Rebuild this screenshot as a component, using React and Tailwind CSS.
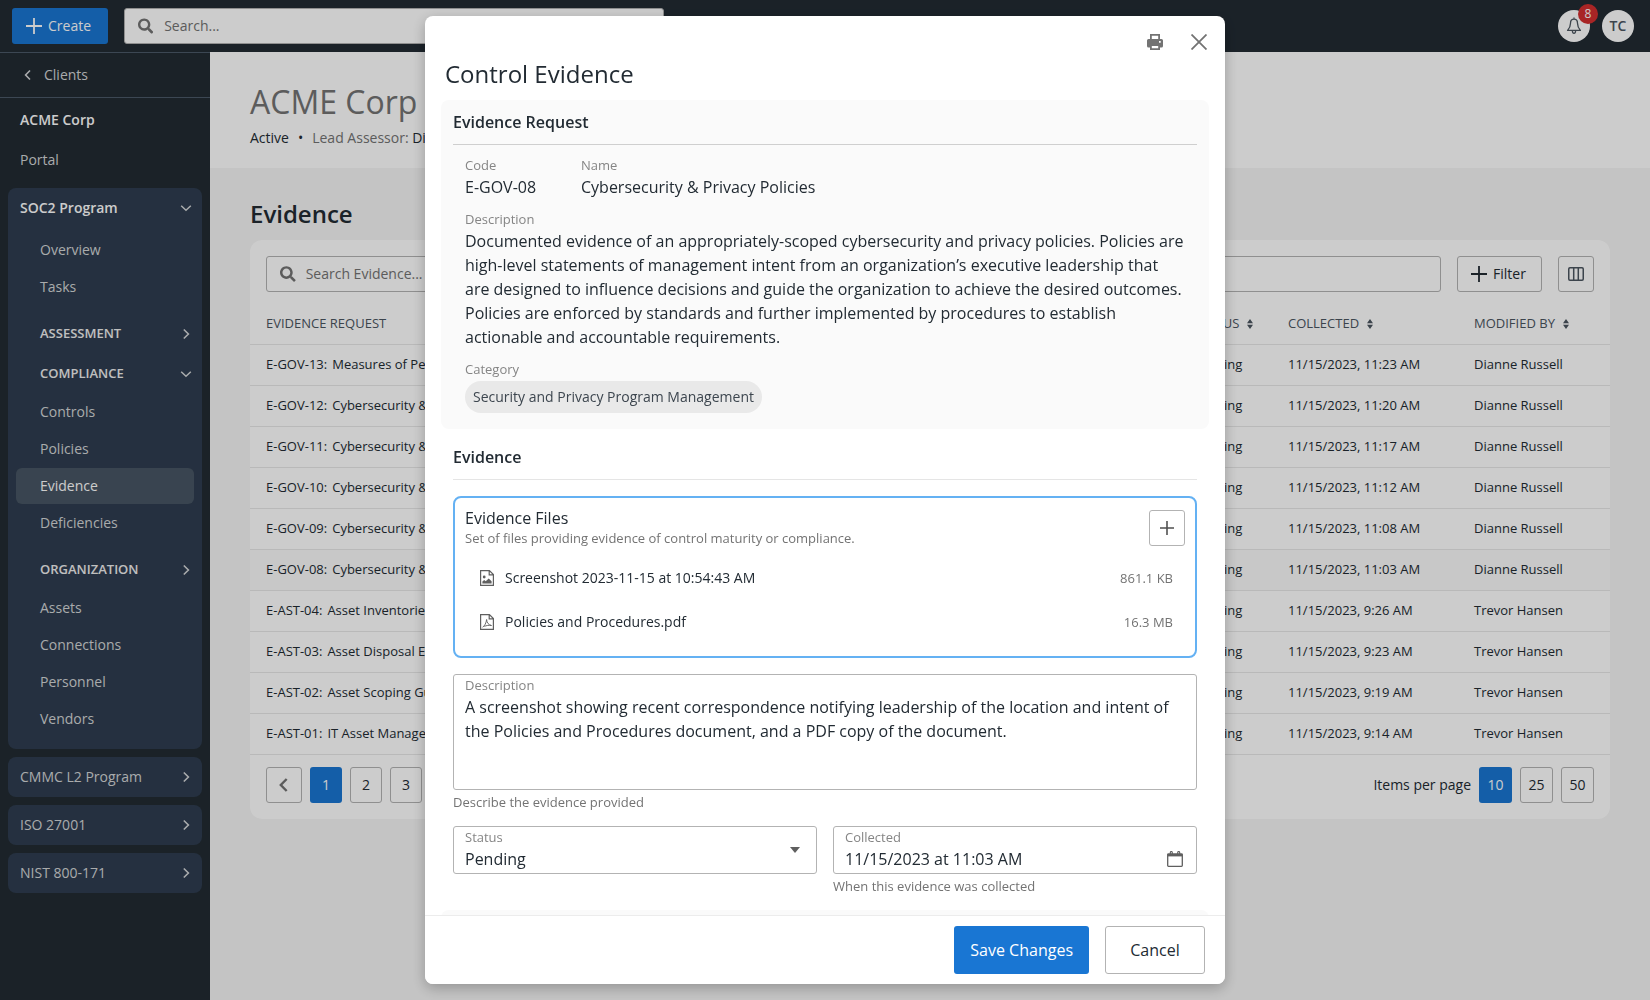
import React, { useState } from 'react';
import { FaSearch } from 'react-icons/fa';

const EVIDENCE = [
  { code: 'E-GOV-13', name: 'Measures of Performance', status: 'Pending', collected: '11/15/2023, 11:23 AM', user: 'Dianne Russell' },
  { code: 'E-GOV-12', name: 'Cybersecurity & Privacy Contacts', status: 'Pending', collected: '11/15/2023, 11:20 AM', user: 'Dianne Russell' },
  { code: 'E-GOV-11', name: 'Cybersecurity & Privacy Reviews', status: 'Pending', collected: '11/15/2023, 11:17 AM', user: 'Dianne Russell' },
  { code: 'E-GOV-10', name: 'Cybersecurity & Privacy Procedures', status: 'Pending', collected: '11/15/2023, 11:12 AM', user: 'Dianne Russell' },
  { code: 'E-GOV-09', name: 'Cybersecurity & Privacy Standards', status: 'Pending', collected: '11/15/2023, 11:08 AM', user: 'Dianne Russell' },
  { code: 'E-GOV-08', name: 'Cybersecurity & Privacy Policies', status: 'Pending', collected: '11/15/2023, 11:03 AM', user: 'Dianne Russell' },
  { code: 'E-AST-04', name: 'Asset Inventories', status: 'Pending', collected: '11/15/2023, 9:26 AM', user: 'Trevor Hansen' },
  { code: 'E-AST-03', name: 'Asset Disposal Evidence', status: 'Pending', collected: '11/15/2023, 9:23 AM', user: 'Trevor Hansen' },
  { code: 'E-AST-02', name: 'Asset Scoping Guidance', status: 'Pending', collected: '11/15/2023, 9:19 AM', user: 'Trevor Hansen' },
  { code: 'E-AST-01', name: 'IT Asset Management', status: 'Pending', collected: '11/15/2023, 9:14 AM', user: 'Trevor Hansen' },
];

// --- Icons ---
const PlusIcon = ({ className = 'size-4' }) => (
  <svg viewBox="0 0 16 16" className={className} fill="none" stroke="currentColor" strokeWidth="1.8">
    <path d="M8 0v16M0 8h16" />
  </svg>
);

const CloseIcon = () => (
  <svg viewBox="0 0 16 16" className="size-4" fill="none" stroke="currentColor" strokeWidth="1.8">
    <path d="M.5.5l15 15M15.5.5l-15 15" />
  </svg>
);

const ChevronRight = () => (
  <svg viewBox="0 0 12 12" className="size-3 shrink-0 text-[#d4d6d8]" fill="none" stroke="currentColor" strokeWidth="1.6">
    <path d="M3.8 1.5L8.4 6l-4.6 4.5" />
  </svg>
);

const ChevronDown = () => (
  <svg viewBox="0 0 12 12" className="size-3 shrink-0 text-[#d4d6d8]" fill="none" stroke="currentColor" strokeWidth="1.5">
    <path d="M1.2 3.7L6 8.3l4.8-4.6" />
  </svg>
);

const ChevronLeft = ({ className = 'size-3', strokeWidth = 1.6 }) => (
  <svg viewBox="0 0 12 12" className={className} fill="none" stroke="currentColor" strokeWidth={strokeWidth}>
    <path d="M8 1.5L3.6 6 8 10.5" />
  </svg>
);

const BellIcon = () => (
  <svg viewBox="0 0 16 18" className="h-[18px] w-4" fill="none" stroke="currentColor" strokeWidth="1.3" strokeLinejoin="round">
    <path d="M8 .5V2.2M8 2.2C5.7 2.2 4.5 4 4.5 6.2c0 3.6-.9 5-2.9 7.2h12.8c-2-2.2-2.9-3.6-2.9-7.2C11.5 4 10.3 2.2 8 2.2z" />
    <path d="M6.4 14c.1 1.6.8 2.3 1.6 2.3s1.5-.7 1.6-2.3" />
  </svg>
);

const SortIcon = () => (
  <svg viewBox="0 0 6 10" className="h-2.5 w-1.5" fill="currentColor">
    <path d="M3 0l3 4.2H0zM3 10L0 5.8h6z" />
  </svg>
);

const ColumnsIcon = () => (
  <svg viewBox="0 0 16 14" className="h-3.5 w-4" fill="none" stroke="currentColor" strokeWidth="1.5">
    <rect x=".75" y=".75" width="14.5" height="12.5" rx="1.2" />
    <path d="M5.7 1v12M10.3 1v12" />
  </svg>
);

const PrintIcon = () => (
  <svg viewBox="0 0 16 16" className="size-4" fill="currentColor" fillRule="evenodd">
    <path d="M3 0h10v5h1.5A1.5 1.5 0 0 1 16 6.5V12a1.5 1.5 0 0 1-1.5 1.5H13V16H3v-2.5H1.500A1.5 1.5 0 0 1 0 12V6.5A1.5 1.5 0 0 1 1.5 5H3zM4.8 1.8V5h6.4V1.8zM4.8 12v2.2h6.4V12zM12 7h1.7v1.7H12z" />
  </svg>
);

const FileImageIcon = () => (
  <svg viewBox="0 0 14 16" className="h-4 w-3.5" fill="none" stroke="currentColor" strokeWidth="1.2">
    <path d="M.6.6h8.8l4 4v10.8H.6zM9.2.6v4.2h4.2" />
    <path d="M2.4 13.4v-1.900l1.800-1.500 1.500 1.200 3-2.700 2.900 2.700v2.200z" fill="currentColor" stroke="none" />
    <circle cx="4.2" cy="7" r="1.4" fill="currentColor" stroke="none" />
  </svg>
);

const FilePdfIcon = () => (
  <svg viewBox="0 0 14 16" className="h-4 w-3.5" fill="none" stroke="currentColor" strokeWidth="1.2">
    <path d="M.6.6h8.8l4 4v10.8H.6zM9.2.6v4.2h4.2" />
    <path d="M2.6 13.2c1.900-1 3.700-4.300 4-7.700.3 3.300 1.800 5.300 4.900 6-2.600-.4-5-.1-7.200.9" strokeWidth=".9" />
  </svg>
);

const CalendarIcon = () => (
  <svg viewBox="0 0 16 16" className="size-4" fill="none" stroke="currentColor" strokeWidth="1.3">
    <rect x=".7" y="2.8" width="14.6" height="12.5" rx=".8" />
    <path d="M.7 4.2h14.6" strokeWidth="2.4" />
    <path d="M3.3 3V1.5a1 1 0 0 1 2 0V3M10.700 3V1.500a1 1 0 0 1 2 0V3" strokeWidth="1.1" />
  </svg>
);

// --- Sidebar ---
function NavItem({ label, active }) {
  return (
    <a
      href="#"
      className={`flex h-9 items-center rounded-md px-6 text-sm ${active ? 'bg-[#485664] text-white' : 'text-[#d4d6d8]'}`}
    >
      {label}
    </a>
  );
}

function NavGroup({ label, open, items = [] }) {
  return (
    <div>
      <button className="flex h-10 w-full items-center justify-between pr-[2px] pl-6 text-[13px] font-semibold text-[#efefef]">
        {label}
        {open ? <ChevronDown /> : <ChevronRight />}
      </button>
      {items.length > 0 && (
        <div className="flex flex-col gap-px">
          {items.map((item) => (
            <NavItem key={item} label={item} active={item === 'Evidence'} />
          ))}
        </div>
      )}
    </div>
  );
}

function Sidebar() {
  return (
    <nav className="w-[210px] shrink-0 border-t border-[#4b5968] bg-[#222b33]">
      <a href="#" className="flex h-[45px] items-center gap-2.5 border-b border-[#4b5968] px-[22px] text-sm text-[#d4d6d8]">
        <ChevronLeft />
        Clients
      </a>
      <div className="flex flex-col py-0.5">
        <a href="#" className="flex h-10 items-center px-5 text-sm font-semibold text-white">ACME Corp</a>
        <a href="#" className="flex h-10 items-center px-5 text-sm text-[#d4d6d8]">Portal</a>
      </div>

      <div className="mt-1.5 flex flex-col gap-2 px-2">
        <div className="rounded-lg bg-[#2f3d50] px-2 pb-3">
          <button className="flex h-10 w-full items-center justify-between pr-[2px] pl-1 text-sm font-semibold text-white">
            SOC2 Program
            <ChevronDown />
          </button>
          <div className="mt-1 mb-[9px] flex flex-col gap-px">
            <NavItem label="Overview" />
            <NavItem label="Tasks" />
          </div>
          <NavGroup label="ASSESSMENT" />
          <div className="mb-[9px]">
            <NavGroup label="COMPLIANCE" open items={['Controls', 'Policies', 'Evidence', 'Deficiencies']} />
          </div>
          <NavGroup label="ORGANIZATION" items={['Assets', 'Connections', 'Personnel', 'Vendors']} />
        </div>
        {['CMMC L2 Program', 'ISO 27001', 'NIST 800-171'].map((name) => (
          <button
            key={name}
            className="flex h-10 items-center justify-between rounded-lg bg-[#2f3d50] pr-2.5 pl-3 text-sm text-[#d4d6d8]"
          >
            {name}
            <ChevronRight />
          </button>
        ))}
      </div>
    </nav>
  );
}

function TopBar() {
  return (
    <header className="flex h-[52px] items-center bg-[#222b33] pr-4 pl-3">
      <button className="flex h-9 w-24 items-center gap-1.5 rounded-[3px] bg-[#1976d3] pl-3.5 text-sm text-white">
        <PlusIcon />
        Create
      </button>
      <label className="ml-4 flex h-9 w-full max-w-[540px] items-center gap-[11px] rounded-[3px] border border-[#b3b3b3] bg-white px-[13px] text-[#737373]">
        <FaSearch className="size-4" />
        <input aria-label="Search" placeholder="Search..." className="w-full text-sm outline-none placeholder:text-[#737373]" />
      </label>
      <div className="ml-auto flex gap-3">
        <button aria-label="Notifications" className="relative flex size-8 items-center justify-center rounded-full bg-white text-[#4b555f]">
          <BellIcon />
          <span className="absolute -top-1.5 -right-2 flex size-5 items-center justify-center rounded-full bg-[#d32f2f] text-xs text-white">8</span>
        </button>
        <button className="size-8 rounded-full bg-white text-sm font-semibold text-[#4b555f]">TC</button>
      </div>
    </header>
  );
}

function PageButton({ active, className = '', children, ...props }) {
  return (
    <button
      className={`flex h-9 items-center justify-center rounded-[3px] text-sm ${
        active ? 'bg-[#1976d3] text-white' : 'border border-[#b3b3b3] text-[#222b33]'
      } ${className}`}
      {...props}
    >
      {children}
    </button>
  );
}

function EvidenceTable() {
  return (
    <div className="rounded-xl bg-white pb-4">
      <div className="flex gap-4 p-4 pb-0">
        <label className="flex h-9 flex-1 items-center gap-2.5 rounded-[3px] border border-[#b3b3b3] px-[13px] text-[#737373]">
          <FaSearch className="size-4" />
          <input aria-label="Search evidence" placeholder="Search Evidence..." className="w-full text-sm outline-none placeholder:text-[#737373]" />
        </label>
        <button className="flex h-9 w-[85px] items-center gap-1.5 rounded-[3px] border border-[#b3b3b3] pl-[13px] text-sm text-[#222b33]">
          <PlusIcon />
          Filter
        </button>
        <button aria-label="Columns" className="flex size-9 items-center justify-center rounded-[3px] border border-[#b3b3b3] text-[#4b555f]">
          <ColumnsIcon />
        </button>
      </div>

      <table className="mt-3 w-full table-fixed text-left text-[13px] text-[#222b33]">
        <colgroup>
          <col />
          <col className="w-[95px]" />
          <col className="w-[186px]" />
          <col className="w-[152px]" />
        </colgroup>
        <thead>
          <tr className="h-10 border-b border-[#e8e8e8] text-[#4b555f]">
            <th scope="col" className="px-4 font-medium">EVIDENCE REQUEST</th>
            {['STATUS', 'COLLECTED', 'MODIFIED BY'].map((head) => (
              <th key={head} scope="col" className="px-4 font-medium">
                <span className="flex items-center gap-2">
                  {head}
                  <SortIcon />
                </span>
              </th>
            ))}
          </tr>
        </thead>
        <tbody>
          {EVIDENCE.map((row) => (
            <tr key={row.code} className={`h-[41px] border-b border-[#e8e8e8] ${row.code === 'E-GOV-08' ? 'bg-[#fafafa]' : ''}`}>
              <td className="px-4">
                <span className="mr-[5px]">{row.code}:</span>
                {row.name}
              </td>
              <td className="px-4">{row.status}</td>
              <td className="px-4">{row.collected}</td>
              <td className="px-4">{row.user}</td>
            </tr>
          ))}
        </tbody>
      </table>

      <div className="mt-3 flex items-center gap-2 px-4">
        <PageButton className="w-9" aria-label="Previous page">
          <ChevronLeft className="size-4 text-[#737373]" strokeWidth={1.8} />
        </PageButton>
        <PageButton className="w-8" active>1</PageButton>
        <PageButton className="w-8">2</PageButton>
        <PageButton className="w-8">3</PageButton>
        <span className="ml-auto text-sm text-[#222b33]">Items per page</span>
        <PageButton className="w-[33px]" active>10</PageButton>
        <PageButton className="w-[33px]">25</PageButton>
        <PageButton className="w-[33px]">50</PageButton>
      </div>
    </div>
  );
}

// --- Modal ---
function Detail({ label, className = '', children }) {
  return (
    <div className={className}>
      <div className="text-[13px] leading-5 text-[#858585]">{label}</div>
      <div>{children}</div>
    </div>
  );
}

function FileRow({ icon, name, size }) {
  return (
    <li className="flex h-11 items-center gap-2 px-3">
      <span className="flex w-5 justify-center text-[#5f5f5f]">{icon}</span>
      <span className="text-sm">{name}</span>
      <span className="ml-auto text-[13px] text-[#737373]">{size}</span>
    </li>
  );
}

function EvidenceModal() {
  const [description, setDescription] = useState(
    'A screenshot showing recent correspondence notifying leadership of the location and intent of the Policies and Procedures document, and a PDF copy of the document.'
  );
  const [status, setStatus] = useState('Pending');
  const [collected, setCollected] = useState('11/15/2023 at 11:03 AM');

  return (
    <div className="fixed inset-0 flex justify-center bg-black/20 p-4">
      <div
        role="dialog"
        aria-labelledby="modal-title"
        className="flex w-full max-w-[800px] flex-col overflow-hidden rounded-lg bg-white text-base leading-6 text-[#222b33] shadow-[0_4px_14px_rgba(0,0,0,0.25)]"
      >
        <div className="flex justify-end gap-2 px-2 pt-2 text-[#737373]">
          <button aria-label="Print" className="flex size-9 items-center justify-center"><PrintIcon /></button>
          <button aria-label="Close" className="flex size-9 items-center justify-center"><CloseIcon /></button>
        </div>
        <h2 id="modal-title" className="px-5 pb-3 text-2xl leading-7">Control Evidence</h2>

        <div className="flex-1 overflow-hidden px-4">
          <section className="rounded-lg bg-[#fafafa] px-3 pb-4">
            <h3 className="border-b border-[#cfcfcf] py-2.5 font-semibold">Evidence Request</h3>
            <div className="flex flex-col gap-2.5 px-3 pt-2.5">
              <div className="flex">
                <Detail label="Code" className="w-[116px]">E-GOV-08</Detail>
                <Detail label="Name">Cybersecurity &amp; Privacy Policies</Detail>
              </div>
              <Detail label="Description">
                Documented evidence of an appropriately-scoped cybersecurity and privacy policies. Policies are
                high-level statements of management intent from an organization’s executive leadership that are
                designed to influence decisions and guide the organization to achieve the desired outcomes. Policies
                are enforced by standards and further implemented by procedures to establish actionable and
                accountable requirements.
              </Detail>
              <Detail label="Category">
                <span className="mt-0.5 flex h-8 w-fit items-center rounded-full bg-[#e9e9e9] px-2 text-sm text-[#3d464f]">
                  Security and Privacy Program Management
                </span>
              </Detail>
            </div>
          </section>

          <section className="mt-1.5 px-3">
            <h3 className="border-b border-[#e5e5e5] py-2.5 font-semibold">Evidence</h3>

            <div className="mt-4 rounded-lg border-2 border-[#64b1f3] px-2.5 pt-2 pb-3">
              <div className="flex items-end justify-between">
                <div>
                  <div>Evidence Files</div>
                  <div className="text-[13px] leading-4 text-[#737373]">
                    Set of files providing evidence of control maturity or compliance.
                  </div>
                </div>
                <button aria-label="Add file" className="flex size-9 items-center justify-center rounded-[3px] border border-[#b3b3b3] text-[#4f4f4f]">
                  <PlusIcon className="size-3.5" />
                </button>
              </div>
              <ul className="mt-2.5">
                <FileRow icon={<FileImageIcon />} name="Screenshot 2023-11-15 at 10:54:43 AM" size="861.1 KB" />
                <FileRow icon={<FilePdfIcon />} name="Policies and Procedures.pdf" size="16.3 MB" />
              </ul>
            </div>

            <div className="mt-4 flex flex-col rounded-[3px] border border-[#b3b3b3] px-[11px]">
              <label htmlFor="description" className="text-[13px] leading-5 text-[#858585]">Description</label>
              <textarea
                id="description"
                value={description}
                onChange={(e) => setDescription(e.target.value)}
                className="h-[94px] resize-none outline-none"
              />
            </div>
            <p className="mt-0.5 text-[13px] leading-5 text-[#737373]">Describe the evidence provided</p>

            <div className="mt-3.5 grid grid-cols-2 gap-4">
              <div className="relative flex h-12 flex-col rounded-[3px] border border-[#b3b3b3] px-[11px]">
                <label htmlFor="status" className="text-[13px] leading-5 text-[#858585]">Status</label>
                <select
                  id="status"
                  value={status}
                  onChange={(e) => setStatus(e.target.value)}
                  className="appearance-none leading-6 outline-none"
                >
                  <option>Pending</option>
                  <option>Collected</option>
                </select>
                <svg viewBox="0 0 10 6" className="pointer-events-none absolute top-5 right-4 h-1.5 w-2.5 text-[#5f5f5f]" fill="currentColor">
                  <path d="M0 0h10L5 6z" />
                </svg>
              </div>
              <div>
                <div className="flex h-12 items-end rounded-[3px] border border-[#b3b3b3] pr-[13px] pl-[11px]">
                  <div className="flex h-full flex-1 flex-col">
                    <label htmlFor="collected" className="text-[13px] leading-5 text-[#858585]">Collected</label>
                    <input
                      id="collected"
                      value={collected}
                      onChange={(e) => setCollected(e.target.value)}
                      className="h-6 outline-none"
                    />
                  </div>
                  <button aria-label="Pick a date" className="pb-1.5 text-[#5f5f5f]"><CalendarIcon /></button>
                </div>
                <p className="mt-0.5 text-[13px] leading-5 text-[#737373]">When this evidence was collected</p>
              </div>
            </div>
          </section>

          <section className="mt-3.5 h-40 rounded-lg bg-[#fafafa]" />
        </div>

        <div className="flex justify-end gap-4 border-t border-[#ececec] bg-white px-5 py-2.5">
          <button className="h-12 rounded-[3px] bg-[#1976d3] px-4 text-white">Save Changes</button>
          <button className="h-12 w-[100px] rounded-[3px] border border-[#b3b3b3]">Cancel</button>
        </div>
      </div>
    </div>
  );
}

function App() {
  return (
    <div className="flex min-h-screen flex-col bg-[#f5f5f5] font-['Open_Sans',sans-serif]">
      <TopBar />
      <div className="flex flex-1">
        <Sidebar />
        <main className="min-w-0 flex-1">
          <div className="h-[116px] bg-white px-10 pt-7 text-sm">
            <h1 className="text-[32px] leading-[44px] text-[#737373]">ACME Corp</h1>
            <p className="flex gap-[9px] leading-7 text-[#222b33]">
              <span>Active</span>
              <span>•</span>
              <span>
                <span className="text-[#737373]">Lead Assessor:</span> Dianne Russell
              </span>
            </p>
          </div>
          <div className="px-10 pt-[30px]">
            <h2 className="mb-[10px] text-2xl leading-8 font-semibold text-[#222b33]">Evidence</h2>
            <EvidenceTable />
          </div>
        </main>
      </div>
      <EvidenceModal />
    </div>
  );
}

export default App;
